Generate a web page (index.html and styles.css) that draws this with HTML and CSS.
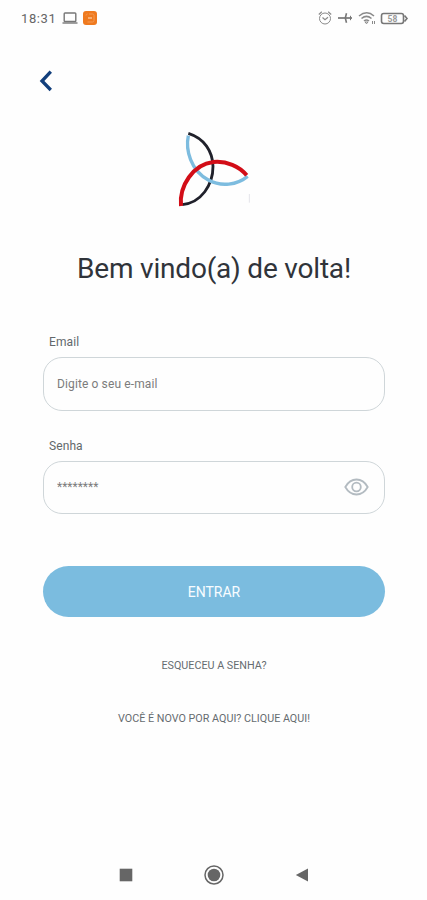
FILE: index.html
```html
<!DOCTYPE html>
<html lang="pt-BR">
<head>
<meta charset="utf-8">
<meta name="viewport" content="width=device-width, initial-scale=1">
<title>Entrar</title>
<link rel="stylesheet" href="styles.css">
</head>
<body>
<div class="screen">
  <div class="status">
    <div class="status-left">
      <span class="clock">18:31</span>
      <svg class="laptop" width="16" height="12" viewBox="0 0 16 12" fill="none" stroke="#777" stroke-width="1.4"><rect x="2.2" y="1" width="11.6" height="8.500" rx=".8"/><path d="M.5 11h15"/></svg>
      <svg class="app" width="14" height="14" viewBox="0 0 14 14" fill="none"><rect width="14" height="14" rx="3" fill="#ef7a1f"/><path d="M3 4.500c0-1 .5-1.500 1.500-1.500M6 3h3.500A1.500 1.500 0 0 1 11 4.500v5A1.500 1.500 0 0 1 9.500 11h-5" stroke="#f59a55"/><path d="M5 7h4" stroke="#fbc08f" stroke-width="1.500"/></svg>
    </div>
    <svg class="status-right" width="92" height="16" viewBox="0 0 92 16" fill="none" stroke="#8a8a8a">
      <circle cx="8" cy="8.500" r="5.500"/><path d="M5.500 7.500 8 9.700l3-2.500M1.800 4.500l3-2.700M14.200 4.500l-3-2.700" stroke-width="1.200"/>
      <path d="M21 8h14" stroke="#777" stroke-width="1.700"/><path d="M29.500 3.200 28.300 8l1.200 4.800" stroke="#777" stroke-width="1.600"/><path d="M33.500 5.800v4.400" stroke="#777"/>
      <path d="M42 6c5-4 10.500-4 15 0M44.500 8.500c3.500-3 6.500-3 10 0M47 11c2-1.700 3-1.700 5 0" stroke-width="1.500"/><path d="m48 12 1.500 1.800L51 12zM55.500 11v3M57.500 11v3"/>
      <rect x="64.500" y="3.500" width="22" height="10" rx="2.200" stroke="#777" stroke-width="1.600"/><path d="M87.500 5.500l2.500 3-2.500 3" stroke="#777" stroke-width="1.600"/>
      <text class="battery" x="75.500" y="11.700" text-anchor="middle">58</text>
    </svg>
  </div>
  <button class="back" aria-label="Voltar"><svg width="14" height="22" viewBox="0 0 14 22" fill="none" stroke="#123f7c" stroke-width="3.300"><path d="M11.800 1.700 3 11l8.800 9"/></svg></button>
  <svg class="logo" width="100" height="100" viewBox="0 0 300 300" fill="none" stroke-width="8.500">
    <path d="M70 40C118 55 143 94 144 139C144 195 109 248 52 254" stroke="#20212b"/>
    <path d="M70 47C61 90 77 151 130 180C169 201 216 195 248 169" stroke="#7dbcdf" stroke-width="10"/>
    <path d="M48 258C42 197 85 133 145 126C184 122 224 139 245 166" stroke="#d20d17" stroke-width="12"/>
    <path d="M253 222v26" stroke="#e4e4ea" stroke-width="3"/>
  </svg>
  <h1 class="title">Bem vindo(a) de volta!</h1>
  <form class="form">
    <label class="label" for="email">Email</label>
    <div class="field"><input class="input" id="email" type="text" placeholder="Digite o seu e-mail"></div>
    <label class="label" for="senha">Senha</label>
    <div class="field field-password">
      <input class="input" id="senha" type="password" placeholder="********">
      <svg width="25" height="18" viewBox="0 0 25 18" fill="none" stroke="#b3bbc1" stroke-width="1.800"><path d="M1.300 9C4 4.200 8 1.500 12.500 1.500S21 4.200 23.700 9C21 13.800 17 16.500 12.500 16.500S4 13.800 1.300 9Z"/><circle cx="12.500" cy="9" r="4.300"/></svg>
    </div>
    <button class="submit" type="button">ENTRAR</button>
  </form>
  <a class="link forgot">ESQUECEU A SENHA?</a>
  <a class="link signup">VOCÊ É NOVO POR AQUI? CLIQUE AQUI!</a>
  <div class="nav">
    <svg width="14" height="14" viewBox="0 0 14 14"><path d="M.7.700h12.600v12.600H.7z" fill="#666"/></svg>
    <svg width="20" height="20" viewBox="0 0 20 20"><circle cx="10" cy="10" r="9" fill="none" stroke="#666" stroke-width="1.500"/><circle cx="10" cy="10" r="6.300" fill="#666"/></svg>
    <svg width="14" height="14" viewBox="0 0 14 14"><path d="M13 .5v13L.8 7z" fill="#666"/></svg>
  </div>
</div>
</body>
</html>
```
FILE: styles.css
```css
* { box-sizing: border-box; }
body { margin: 0; background: #fefefe; font-family: Roboto, "Liberation Sans", sans-serif; }
.screen { width: 427px; height: 900px; display: flex; flex-direction: column; align-items: center; background: #fefefe; overflow: hidden; }
.status { width: 100%; height: 36px; padding: 0 18px 0 21px; display: flex; justify-content: space-between; align-items: center; }
.status-left { display: flex; align-items: center; }
.clock { font-size: 13px; letter-spacing: .6px; color: #666; width: 41px; }
.laptop { margin-right: 5px; }
.battery { font-size: 8.500px; font-weight: 700; fill: #999; stroke: none; }
.back { align-self: flex-start; margin: 34px 0 0 39px; width: 14px; height: 22px; padding: 0; border: 0; background: none; }
.back svg { display: block; }
.logo { margin: 28px 0 0 3px; flex: none; }
.title { margin: 31px 0 0 1px; height: 36px; line-height: 36px; font-size: 28px; letter-spacing: -.2px; font-weight: 400; color: #30343a; white-space: nowrap; }
.form { width: 342px; margin: 0 0 0 1px; padding-top: 45px; display: flex; flex-direction: column; }
.label { height: 20px; line-height: 20px; margin: 0 0 5px 6px; font-size: 12px; color: #62686b; letter-spacing: .1px; }
.field { height: 54px; border: 1px solid #cfd6d9; border-radius: 19px; padding: 0 15px 0 13px; display: flex; align-items: center; margin-bottom: 25px; }
.field-password { height: 53px; padding-bottom: 1px; }
.input { flex: 1; min-width: 0; border: 0; padding: 0; outline: 0; background: none; font: 12px Roboto, "Liberation Sans", sans-serif; letter-spacing: .12px; color: #666; }
.input::placeholder { color: #7c7c7c; opacity: 1; }
#senha { letter-spacing: 0; }
.submit { height: 51px; margin-top: 27px; border: 0; border-radius: 26px; background: #7bbcdf; color: #f8fcff; font: 14px Roboto, "Liberation Sans", sans-serif; }
.link { height: 16px; line-height: 16px; font-size: 10.750px; color: #666c70; white-space: nowrap; margin-left: 1px; }
.forgot { margin-top: 41px; }
.signup { margin-top: 37px; }
.nav { width: 190px; margin: auto 0 15px 0; display: flex; justify-content: space-between; align-items: center; }
```
